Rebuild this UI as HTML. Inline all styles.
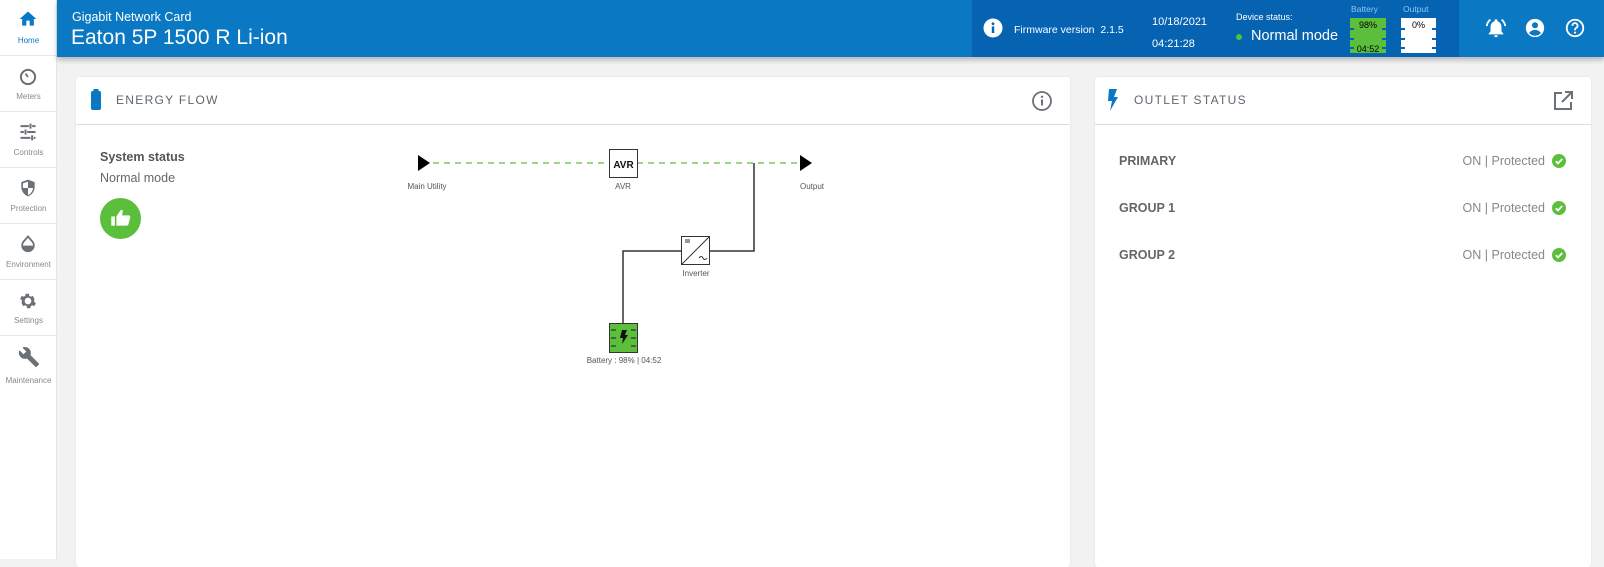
<!DOCTYPE html>
<html><head><meta charset="utf-8"><style>
*{margin:0;padding:0;box-sizing:border-box}
body{width:1604px;height:559px;overflow:hidden;background:#f2f2f2;font-family:"Liberation Sans",sans-serif;position:relative}
.a{position:absolute}
.side{left:0;top:0;width:57px;height:559px;background:#fff;border-right:1px solid #e4e4e4}
.it{position:absolute;left:0;width:57px;height:56px;border-bottom:1px solid #e6e6e6;text-align:center}
.it span{position:absolute;left:0;width:57px;font-size:8px;color:#888}
.it svg{position:absolute;left:18px}
.hdr{left:57px;top:0;right:0;height:57px;background:#0a78c2;box-shadow:0 3px 5px rgba(0,0,0,.25)}
.card{background:#fff;border-radius:3px;box-shadow:0 0 2px rgba(0,0,0,.08)}
.t{font-size:12px;letter-spacing:1.3px;color:#5e6770}
.lbl{font-size:8px;color:#555;transform:translateX(-50%);white-space:nowrap}
.row{font-size:12.5px;color:#666;font-weight:bold}
.st{font-size:12.5px;color:#888}
.dl{position:absolute;width:4px;height:1.5px;background:#0563b2}
</style></head><body>
<div class="a side">
 <div class="it" style="top:0"><svg width="20" height="20" viewBox="0 0 24 24" style="top:9px"><path d="M10 20v-6h4v6h5v-8h3L12 3 2 12h3v8z" fill="#0a78c2"/></svg><span style="top:36px;color:#0a78c2">Home</span></div>
 <div class="it" style="top:56px"><svg width="20" height="20" viewBox="0 0 24 24" style="top:11px"><circle cx="12" cy="12" r="8.5" fill="none" stroke="#6b7177" stroke-width="2.4"/><path d="M12 12l-3-4M8 13h.1M12 16h.1M16 13h.1" stroke="#6b7177" stroke-width="2.2"/></svg><span style="top:36px">Meters</span></div>
 <div class="it" style="top:112px"><svg width="20" height="20" viewBox="0 0 24 24" style="top:10px"><path d="M3 5h10M17 5h4M15 2v6M3 12h4M11 12h10M9 9v6M3 19h12M19 19h2M17 16v6" stroke="#6b7177" stroke-width="2.4"/></svg><span style="top:36px">Controls</span></div>
 <div class="it" style="top:168px"><svg width="20" height="20" viewBox="0 0 24 24" style="top:10px"><path d="M12 2l8 3v6c0 5-3.5 9.5-8 11-4.5-1.5-8-6-8-11V5z" fill="#6b7177"/><path d="M12 4.3v7.7h6c-.3 4-2.8 7.3-6 8.6V12H6V6.4z" fill="#fff"/></svg><span style="top:36px">Protection</span></div>
 <div class="it" style="top:224px"><svg width="20" height="20" viewBox="0 0 24 24" style="top:10px"><path d="M12 3l6 7a7 7 0 1 1-12 0z" fill="none" stroke="#6b7177" stroke-width="2.2"/><path d="M5.3 14h13.4a6.7 6.7 0 0 1-13.4 0z" fill="#6b7177"/></svg><span style="top:36px">Environment</span></div>
 <div class="it" style="top:280px"><svg width="20" height="20" viewBox="0 0 24 24" style="top:11px"><path d="M12 8a4 4 0 1 0 0 8 4 4 0 0 0 0-8zm7.4 5l2.1 1.6-2 3.5-2.5-1a7 7 0 0 1-1.7 1l-.4 2.6h-4l-.4-2.6a7 7 0 0 1-1.7-1l-2.5 1-2-3.5L4.6 13a7 7 0 0 1 0-2L2.5 9.4l2-3.5 2.5 1a7 7 0 0 1 1.7-1L9.1 3.3h4l.4 2.6a7 7 0 0 1 1.7 1l2.5-1 2 3.5L19.4 11a7 7 0 0 1 0 2z" fill="#6b7177"/></svg><span style="top:36px">Settings</span></div>
 <div class="it" style="top:336px;border:none"><svg width="22" height="22" viewBox="0 0 24 24" style="top:10px"><path d="M22.7 19l-9.1-9.1c.9-2.3.4-5-1.5-6.9-2-2-5-2.4-7.4-1.3L9 6 6 9 1.6 4.7C.4 7.1.9 10.1 2.9 12.1c1.9 1.9 4.6 2.4 6.9 1.5l9.1 9.1c.4.4 1 .4 1.4 0l2.3-2.3c.5-.4.5-1.1.1-1.4z" fill="#6b7177"/></svg><span style="top:40px">Maintenance</span></div>
</div>
<div class="a hdr">
 <div class="a" style="left:15px;top:10px;color:#fff;font-size:12.5px">Gigabit Network Card</div>
 <div class="a" style="left:14px;top:26px;color:#fff;font-size:21px">Eaton 5P 1500 R Li-ion</div>
 <div class="a" style="left:915px;top:0;width:487px;height:57px;background:#0563b2"></div>
 <svg class="a" style="left:926px;top:18px" width="20" height="20" viewBox="0 0 20 20"><circle cx="10" cy="10" r="9.5" fill="#fff"/><rect x="8.8" y="8.5" width="2.4" height="6.5" fill="#0563b2"/><circle cx="10" cy="5.8" r="1.4" fill="#0563b2"/></svg>
 <div class="a" style="left:957px;top:24px;color:#fff;font-size:10.5px">Firmware version&nbsp; 2.1.5</div>
 <div class="a" style="left:1095px;top:11px;color:#fff;font-size:11px;line-height:22px">10/18/2021<br>04:21:28</div>
 <div class="a" style="left:1179px;top:12px;color:#fff;font-size:9px">Device status:</div>
 <div class="a" style="left:1179px;top:34px;width:6px;height:6px;border-radius:50%;background:#4fc23a"></div>
 <div class="a" style="left:1194px;top:28px;color:#fff;font-size:14.5px">Normal mode</div>
 <div class="a" style="left:1294px;top:4px;color:#8fc7f0;font-size:8.5px">Battery</div>
 <div class="a" style="left:1293px;top:18px;width:36px;height:35px;background:#5cbf3b;font-size:9px;text-align:center;line-height:12px;padding-top:1px">98%<br><br>04:52
  <div class="dl" style="left:0;top:10px"></div><div class="dl" style="left:0;top:20px"></div><div class="dl" style="left:0;top:29px"></div>
  <div class="dl" style="right:0;top:10px"></div><div class="dl" style="right:0;top:20px"></div><div class="dl" style="right:0;top:29px"></div></div>
 <div class="a" style="left:1346px;top:4px;color:#8fc7f0;font-size:8.5px">Output</div>
 <div class="a" style="left:1344px;top:18px;width:35px;height:35px;background:#fff;font-size:9px;text-align:center;line-height:12px;padding-top:1px">0%
  <div class="dl" style="left:0;top:10px"></div><div class="dl" style="left:0;top:20px"></div><div class="dl" style="left:0;top:29px"></div>
  <div class="dl" style="right:0;top:10px"></div><div class="dl" style="right:0;top:20px"></div><div class="dl" style="right:0;top:29px"></div></div>
 <svg class="a" style="left:1428px;top:17px" width="22" height="22" viewBox="0 0 24 24"><path d="M12 22a2 2 0 0 0 2-2h-4a2 2 0 0 0 2 2zm6-6v-5c0-3-1.6-5.6-4.5-6.3V4a1.5 1.5 0 0 0-3 0v.7C7.6 5.4 6 8 6 11v5l-2 2v1h16v-1zM6.6 3.6L5.2 2.2C2.8 4 1.2 6.8 1 10h2c.2-2.6 1.5-4.9 3.6-6.4zM21 10h2c-.2-3.2-1.8-6-4.2-7.8l-1.4 1.4c2.1 1.5 3.4 3.8 3.6 6.4z" fill="#fff"/></svg>
 <svg class="a" style="left:1467px;top:17px" width="22" height="22" viewBox="0 0 24 24"><circle cx="12" cy="12" r="10" fill="#fff"/><circle cx="12" cy="9" r="3.3" fill="#0a78c2"/><path d="M5.5 17.5c1.5-2.3 4-3.5 6.5-3.5s5 1.2 6.5 3.5a8.6 8.6 0 0 1-13 0z" fill="#0a78c2"/></svg>
 <svg class="a" style="left:1507px;top:17px" width="22" height="22" viewBox="0 0 24 24"><circle cx="12" cy="12" r="9" fill="none" stroke="#fff" stroke-width="2"/><path d="M9.2 9.5a2.8 2.8 0 1 1 4 2.5c-.9.5-1.2 1-1.2 2v.5" fill="none" stroke="#fff" stroke-width="2"/><circle cx="12" cy="17" r="1.2" fill="#fff"/></svg>
</div>
<div class="a card" style="left:76px;top:77px;width:994px;height:490px">
 <svg class="a" style="left:14px;top:12px" width="12" height="22" viewBox="0 0 12 22"><rect x="3.5" y="0" width="5" height="3" fill="#0a78c2"/><rect x="1" y="2" width="10" height="19" rx="2" fill="#0a78c2"/></svg>
 <div class="a t" style="left:40px;top:16px">ENERGY FLOW</div>
 <svg class="a" style="left:955px;top:13px" width="22" height="22" viewBox="0 0 22 22"><circle cx="11" cy="11" r="9" fill="none" stroke="#6b7177" stroke-width="1.8"/><rect x="10" y="9.5" width="2" height="6" fill="#6b7177"/><circle cx="11" cy="6.8" r="1.2" fill="#6b7177"/></svg>
 <div class="a" style="left:0;top:47px;width:994px;height:1px;background:#dcdcdc"></div>
 <div class="a" style="left:24px;top:73px;font-size:12.5px;color:#555;font-weight:bold">System status</div>
 <div class="a" style="left:24px;top:94px;font-size:12.5px;color:#666">Normal mode</div>
 <svg class="a" style="left:24px;top:121px" width="41" height="41" viewBox="0 0 40 40"><circle cx="20" cy="20" r="20" fill="#5cbf3b"/><rect x="11" y="18" width="3.5" height="9" fill="#fff"/><path d="M16 18l4-6c1-1 2.5-.3 2.2 1L21.5 17H28c1 0 1.8 1 1.5 2l-1.7 6.5c-.3 1-1 1.5-2 1.5H16z" fill="#fff"/></svg>
</div>
<svg class="a" style="left:0;top:0" width="1070" height="400">
 <path d="M433 163H609M637 163H800" stroke="#5cbf3b" stroke-width="1.2" stroke-dasharray="6 5"/>
 <path d="M418 155l12 8-12 8z" fill="#000"/>
 <path d="M800 155l12 8-12 8z" fill="#000"/>
 <rect x="609.5" y="149.5" width="28" height="28" fill="#fff" stroke="#333"/>
 <text x="623.5" y="168" font-family="Liberation Sans" font-weight="bold" font-size="10" text-anchor="middle" fill="#111">AVR</text>
 <path d="M754 163V251H710M681 251H623V323" fill="none" stroke="#333" stroke-width="1.5"/>
 <rect x="681.5" y="236.5" width="28" height="28" fill="#fff" stroke="#333"/>
 <path d="M682 264L709 237M685 240h5M685 242h5M699 258c1.5-2 3-2 4 0s2.5 2 4 0" fill="none" stroke="#333" stroke-width="1"/>
 <rect x="609.5" y="323.5" width="28" height="29" fill="#5cbf3b" stroke="#333"/>
 <path d="M611 330h5M611 338h5M611 346h5M631 330h5M631 338h5M631 346h5" stroke="#333" stroke-width="1.2"/>
 <path d="M622 330h5l-2 5h3l-6 9 1-6h-3z" fill="#111"/>
</svg>
<div class="a lbl" style="left:427px;top:182px">Main Utility</div>
<div class="a lbl" style="left:623px;top:182px">AVR</div>
<div class="a lbl" style="left:812px;top:182px">Output</div>
<div class="a lbl" style="left:696px;top:269px">Inverter</div>
<div class="a lbl" style="left:624px;top:356px">Battery : 98% | 04:52</div>
<div class="a card" style="left:1095px;top:77px;width:496px;height:490px">
 <svg class="a" style="left:12px;top:12px" width="12" height="22" viewBox="0 0 12 22"><path d="M2 0h8L7 8h4L3 22l2-10H1z" fill="#0a78c2"/></svg>
 <div class="a t" style="left:39px;top:16px">OUTLET STATUS</div>
 <svg class="a" style="left:457px;top:13px" width="22" height="22" viewBox="0 0 22 22"><path d="M10 3H3v16h16v-7" fill="none" stroke="#6b7177" stroke-width="2"/><path d="M13 2h7v7M20 2L10 12" fill="none" stroke="#6b7177" stroke-width="2"/></svg>
 <div class="a" style="left:0;top:47px;width:496px;height:1px;background:#dcdcdc"></div>
 <div class="a row" style="left:24px;top:77px">PRIMARY</div>
 <div class="a row" style="left:24px;top:124px">GROUP 1</div>
 <div class="a row" style="left:24px;top:171px">GROUP 2</div>
 <div class="a st" style="right:46px;top:77px">ON | Protected</div>
 <div class="a st" style="right:46px;top:124px">ON | Protected</div>
 <div class="a st" style="right:46px;top:171px">ON | Protected</div>
 <svg class="a" style="left:457px;top:77px" width="14" height="14" viewBox="0 0 14 14"><circle cx="7" cy="7" r="7" fill="#5cbf3b"/><path d="M3.8 7.2l2.2 2.2 4.2-4.4" fill="none" stroke="#fff" stroke-width="1.8"/></svg>
 <svg class="a" style="left:457px;top:124px" width="14" height="14" viewBox="0 0 14 14"><circle cx="7" cy="7" r="7" fill="#5cbf3b"/><path d="M3.8 7.2l2.2 2.2 4.2-4.4" fill="none" stroke="#fff" stroke-width="1.8"/></svg>
 <svg class="a" style="left:457px;top:171px" width="14" height="14" viewBox="0 0 14 14"><circle cx="7" cy="7" r="7" fill="#5cbf3b"/><path d="M3.8 7.2l2.2 2.2 4.2-4.4" fill="none" stroke="#fff" stroke-width="1.8"/></svg>
</div>
</body></html>
